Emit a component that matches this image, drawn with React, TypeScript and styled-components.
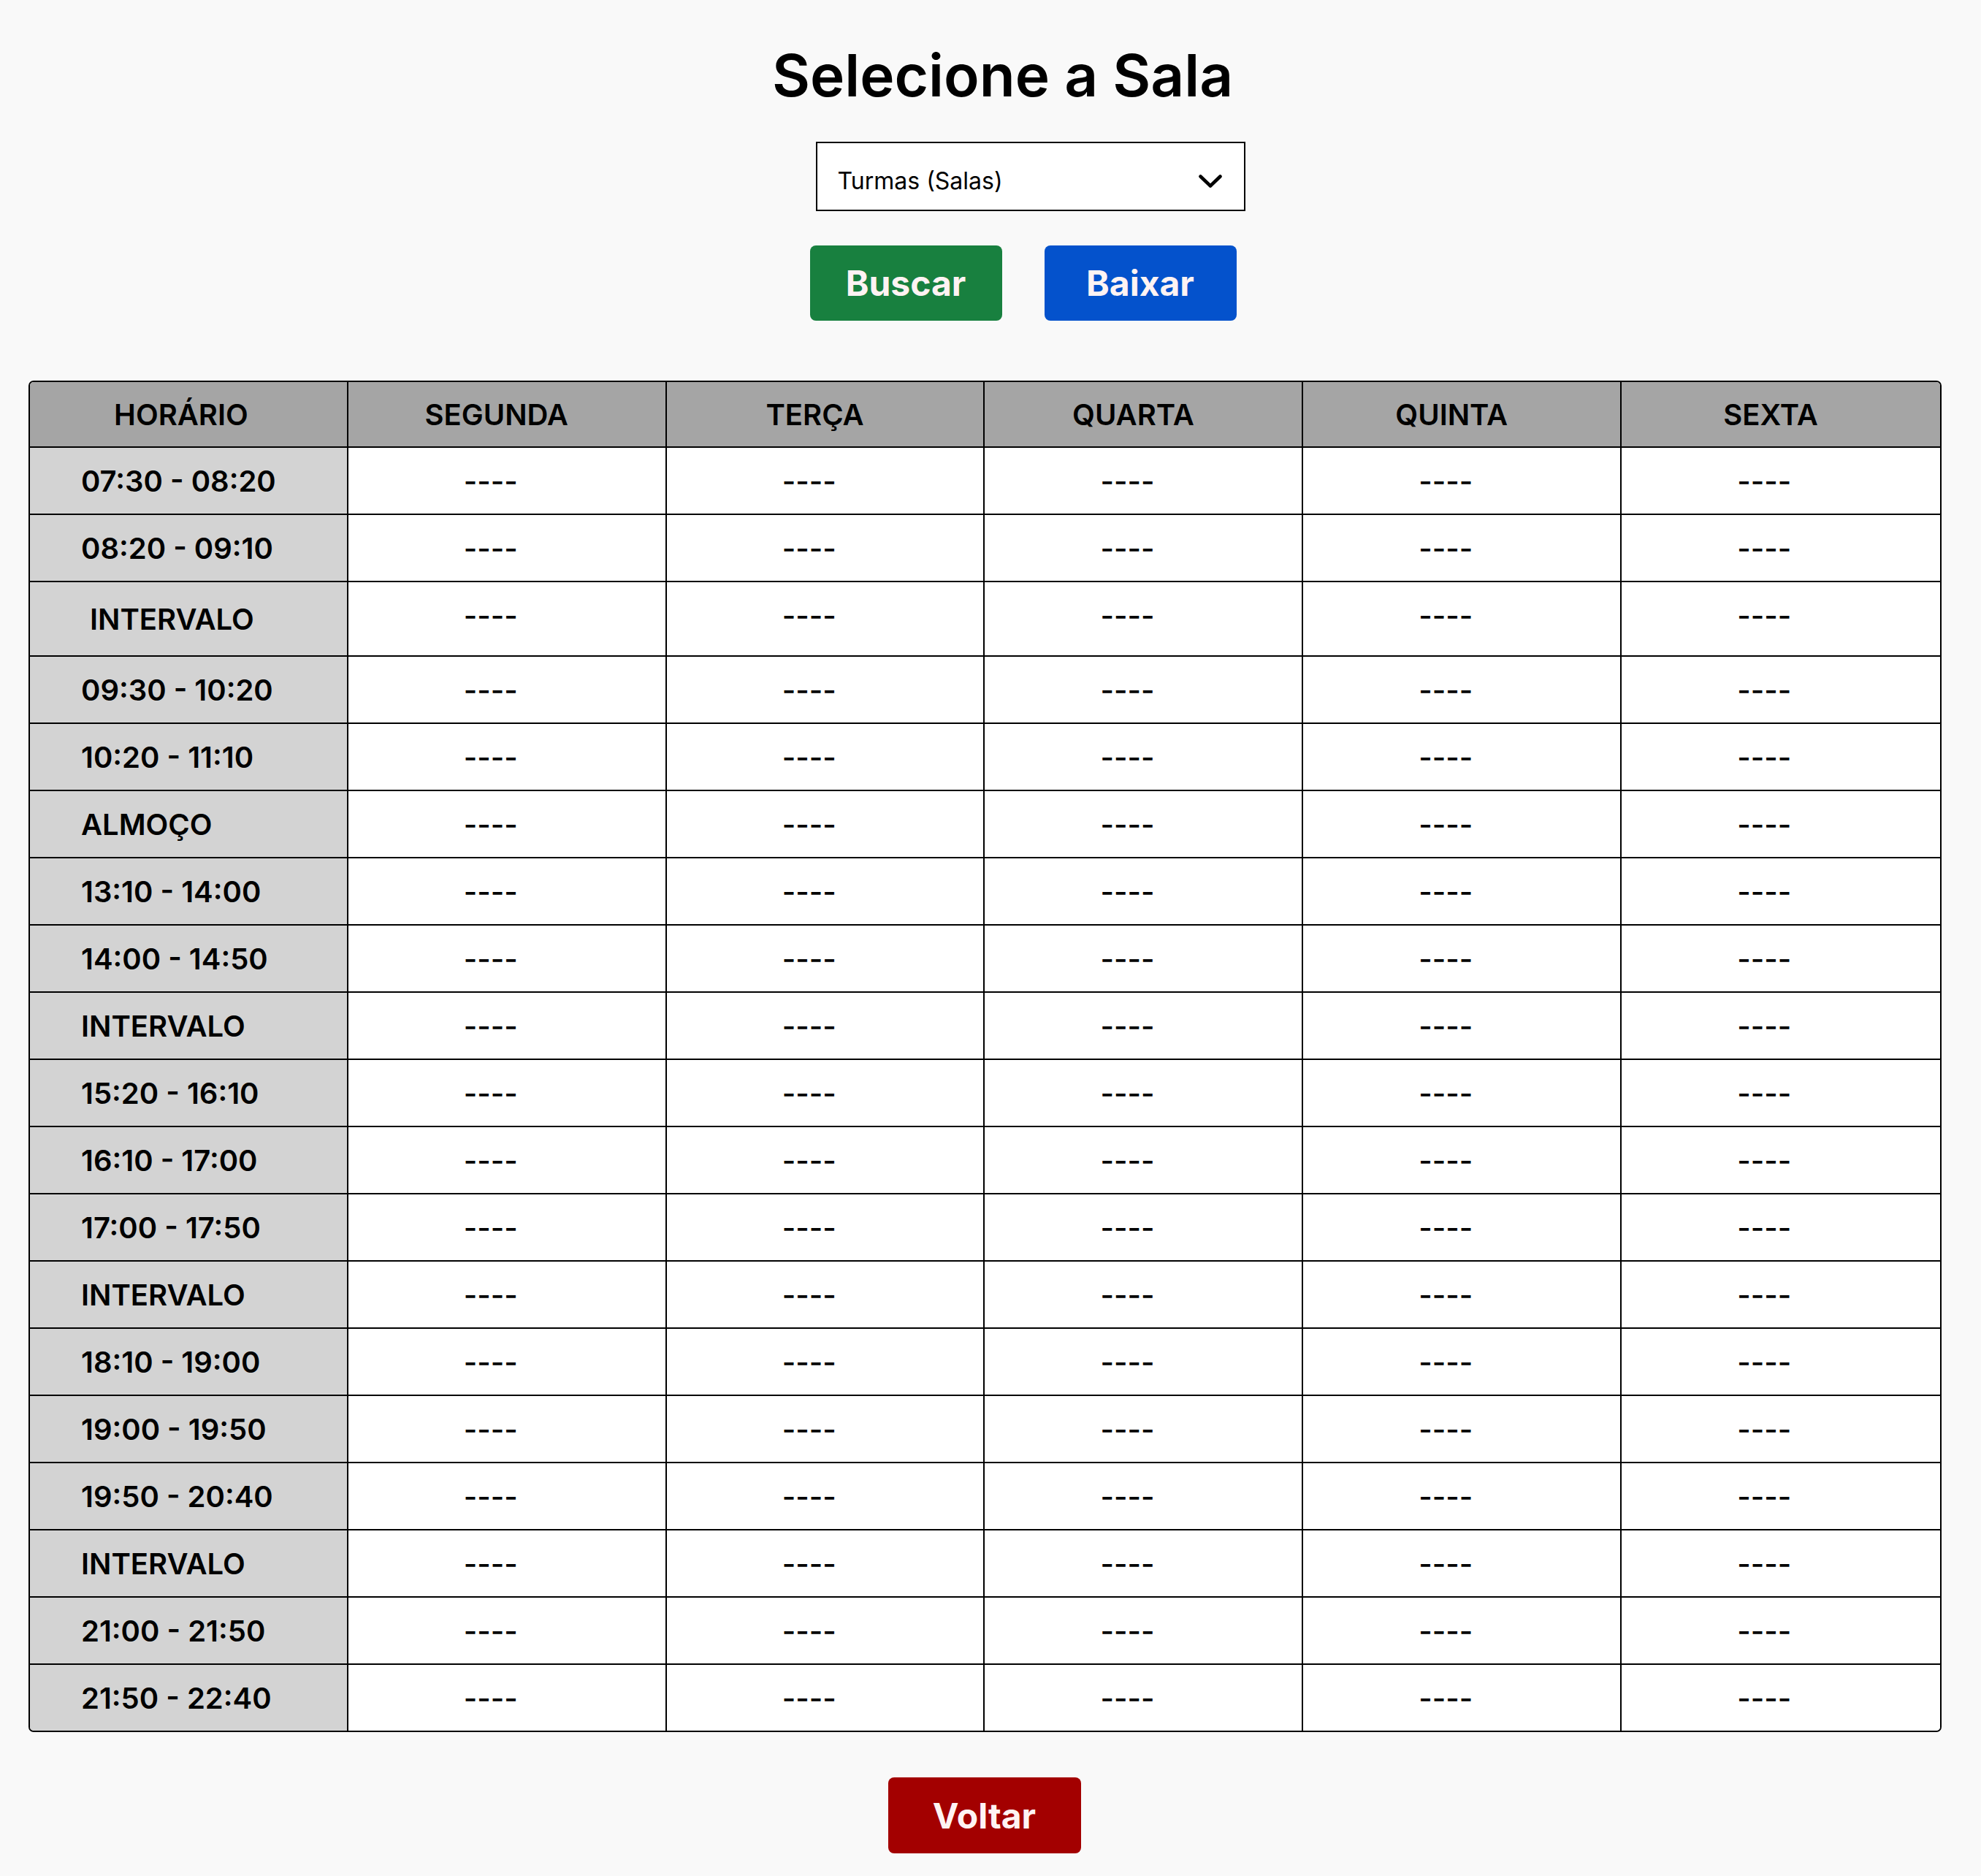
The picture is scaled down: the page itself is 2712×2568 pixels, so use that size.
import React from "react";
import styled, { createGlobalStyle } from "styled-components";

const GlobalStyle = createGlobalStyle`
  *, *::before, *::after { box-sizing: border-box; }
  html, body { margin: 0; padding: 0; background: #f9f9f9; }
  body { font-family: Inter, "Noto Sans", sans-serif; color: #000; }
`;

const Page = styled.main`
  width: 2619px;
  margin-left: 39px;
  padding: 54px 0 32px;
  display: flex;
  flex-direction: column;
  align-items: center;
`;

const Title = styled.h1`
  margin: 0 0 0 48px;
  font-size: 80px;
  font-weight: 600;
  line-height: 97px;
  letter-spacing: 0;
`;

const SelectBox = styled.div`
  margin: 43px 0 0 124px;
  width: 588px;
  height: 95px;
  border: 2px solid #000;
  background: #fff;
  display: flex;
  align-items: center;
  justify-content: space-between;
  padding: 12px 29px 0 28px;
  font-size: 32px;
  font-weight: 400;
  cursor: pointer;
`;

const ButtonRow = styled.div`
  margin: 47px 0 0 104px;
  display: flex;
  gap: 58px;
`;

const ActionButton = styled.button<{ $bg: string }>`
  width: 263px;
  height: 103px;
  border: none;
  border-radius: 8px;
  background: ${(p) => p.$bg};
  color: #fff3f3;
  font-family: inherit;
  font-size: 48px;
  font-weight: 700;
  display: flex;
  align-items: center;
  justify-content: center;
  cursor: pointer;
`;

const BackButton = styled(ActionButton)`
  margin-top: 62px;
  margin-right: 2px;
  width: 264px;
  height: 104px;
  padding-left: 6px;
`;

const TableFrame = styled.div`
  margin-top: 82px;
  width: 100%;
  border: 2px solid #000;
  border-radius: 7px;
  overflow: hidden;
  background: #fff;
`;

const Table = styled.table`
  width: 100%;
  border-collapse: separate;
  border-spacing: 0;
  table-layout: fixed;
`;

const HeadCell = styled.th`
  height: 90px;
  padding: 0 28px 0 0;
  background: #a5a5a5;
  border-bottom: 2px solid #000;
  border-right: 2px solid #000;
  font-size: 40px;
  font-weight: 600;
  text-align: center;
  vertical-align: middle;
  &:first-child { padding-right: 20px; }
  &:last-child { border-right: none; }
`;

const Row = styled.tr<{ $tall?: boolean }>`
  & > td {
    height: ${(p) => (p.$tall ? 102 : 92)}px;
  }
  &:last-child > td {
    border-bottom: none;
    height: 90px;
  }
`;

const TimeCell = styled.td<{ $indent?: number }>`
  padding: 0 0 0 ${(p) => 70 + (p.$indent ?? 0)}px;
  background: #d3d3d3;
  border-bottom: 2px solid #000;
  border-right: 2px solid #000;
  font-size: 40px;
  font-weight: 600;
  text-align: left;
  vertical-align: middle;
  white-space: nowrap;
`;

const DashCell = styled.td<{ $lift?: boolean }>`
  padding: 0 0 ${(p) => (p.$lift ? 10 : 0)}px 158px;
  background: #fff;
  border-bottom: 2px solid #000;
  border-right: 2px solid #000;
  font-size: 40px;
  font-weight: 500;
  text-align: left;
  vertical-align: middle;
  &:last-child { border-right: none; }
`;

const Chevron = () => (
  <svg width="34" height="20" viewBox="0 0 34 20" aria-hidden="true">
    <path
      d="M3.5 3.5 L17 16.5 L30.5 3.5"
      fill="none"
      stroke="#000"
      strokeWidth="4.6"
      strokeLinecap="round"
      strokeLinejoin="round"
    />
  </svg>
);

const days = ["SEGUNDA", "TERÇA", "QUARTA", "QUINTA", "SEXTA"];

const slots: { label: string; tall?: boolean; indent?: number }[] = [
  { label: "07:30 - 08:20" },
  { label: "08:20 - 09:10" },
  { label: "INTERVALO", tall: true, indent: 12 },
  { label: "09:30 - 10:20" },
  { label: "10:20 - 11:10" },
  { label: "ALMOÇO" },
  { label: "13:10 - 14:00" },
  { label: "14:00 - 14:50" },
  { label: "INTERVALO" },
  { label: "15:20 - 16:10" },
  { label: "16:10 - 17:00" },
  { label: "17:00 - 17:50" },
  { label: "INTERVALO" },
  { label: "18:10 - 19:00" },
  { label: "19:00 - 19:50" },
  { label: "19:50 - 20:40" },
  { label: "INTERVALO" },
  { label: "21:00 - 21:50" },
  { label: "21:50 - 22:40" },
];

export default function App() {
  return (
    <>
      <GlobalStyle />
      <Page>
        <Title>Selecione a Sala</Title>
        <SelectBox role="combobox">
          <span>Turmas (Salas)</span>
          <Chevron />
        </SelectBox>
        <ButtonRow>
          <ActionButton $bg="#18803f">Buscar</ActionButton>
          <ActionButton $bg="#0452cc">Baixar</ActionButton>
        </ButtonRow>
        <TableFrame>
          <Table>
            <thead>
              <tr>
                <HeadCell>HORÁRIO</HeadCell>
                {days.map((d) => (
                  <HeadCell key={d}>{d}</HeadCell>
                ))}
              </tr>
            </thead>
            <tbody>
              {slots.map((s, i) => (
                <Row key={i} $tall={s.tall}>
                  <TimeCell $indent={s.indent}>{s.label}</TimeCell>
                  {days.map((d) => (
                    <DashCell key={d} $lift={s.tall}>
                      ----
                    </DashCell>
                  ))}
                </Row>
              ))}
            </tbody>
          </Table>
        </TableFrame>
        <BackButton $bg="#a30000">Voltar</BackButton>
      </Page>
    </>
  );
}
